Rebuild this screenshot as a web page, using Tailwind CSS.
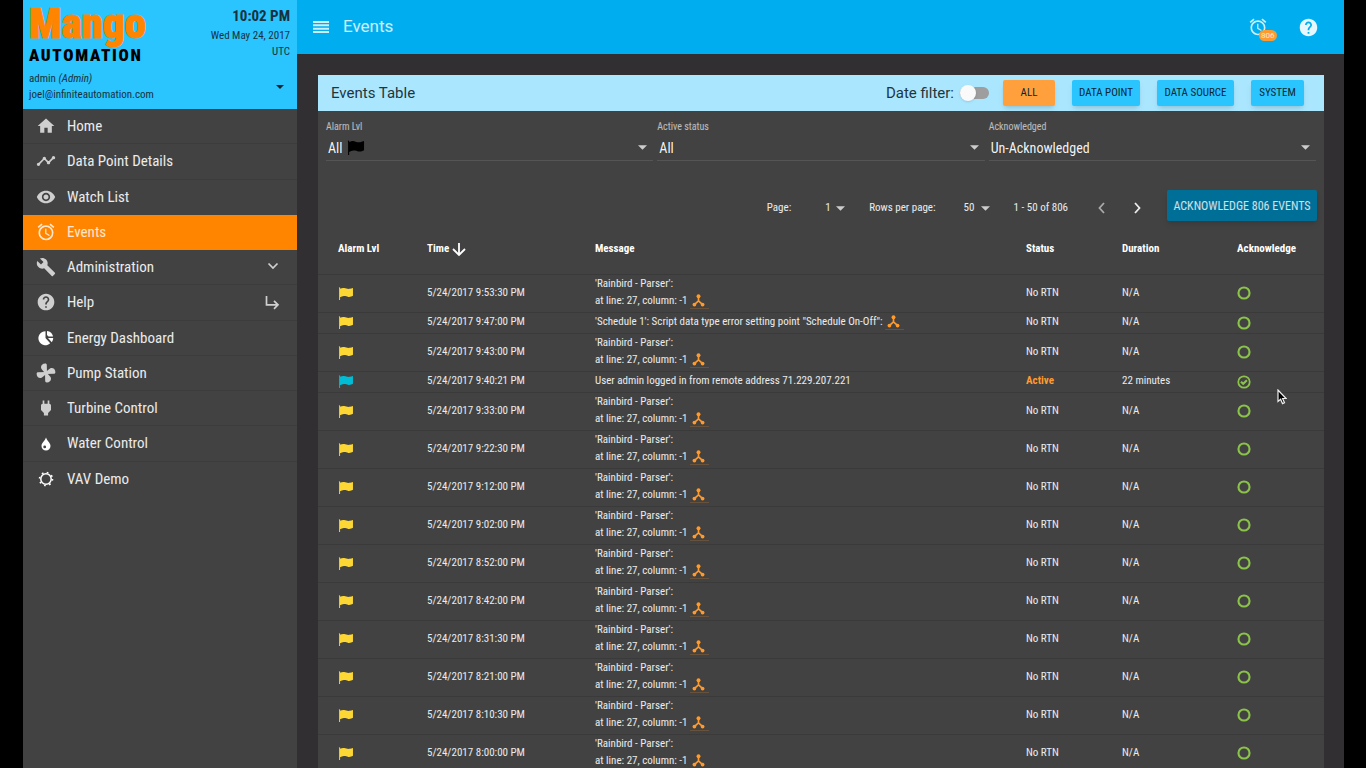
<!DOCTYPE html>
<html lang="en">
<head>
<meta charset="utf-8">
<meta name="viewport" content="width=device-width, initial-scale=1">
<title>Events - Mango Automation</title>
<script src="https://cdn.jsdelivr.net/npm/@tailwindcss/browser@4"></script>
</head>
<body class="h-screen overflow-hidden bg-black font-['Roboto_Condensed',Roboto,sans-serif] text-white/90">
<svg class="hidden" aria-hidden="true">
  <symbol id="flag" viewBox="0 0 16 14"><path fill="currentColor" d="M1 .4a.8.8 0 0 1 .6 1.3V2c1.600-.9 3-1.100 4.400-.9 2 .3 3.600 1.400 6 .9 1.300-.2 2.300-.8 3.500-1v8.500c-1.600.8-3.200 1.500-5 1.200-1.700-.3-3-1-4.800-.9-1.500.1-2.800.7-4.100 1.300V14H.6V1.700A.8.8 0 0 1 1 .4z"/></symbol>
  <symbol id="tree" viewBox="0 0 14 14"><path fill="none" stroke="currentColor" stroke-width="1.800" d="M7 2.500v5L2.500 11.500M7 7.500l4.500 4"/><circle cx="7" cy="2.500" r="2.100" fill="currentColor"/><circle cx="2.600" cy="11.400" r="2" fill="currentColor"/><circle cx="11.400" cy="11.400" r="2" fill="currentColor"/></symbol>
  <symbol id="ring" viewBox="0 0 24 24"><circle cx="12" cy="12" r="9.500" fill="none" stroke="currentColor" stroke-width="3.600"/></symbol>
  <symbol id="ringcheck" viewBox="0 0 24 24"><g fill="none" stroke="currentColor"><circle cx="12" cy="12" r="9.800" stroke-width="3"/><path stroke-width="3.600" d="M6.800 11.500l3.800 3.600 6.400-6.300"/></g></symbol>
  <symbol id="alarm" viewBox="0 0 24 24"><path fill="currentColor" d="M22 5.720l-4.600-3.860-1.290 1.530 4.600 3.860L22 5.720zM7.880 3.390L6.600 1.860 2 5.710l1.290 1.530 4.590-3.850zM12.500 8H11v6l4.750 2.850.75-1.230-4-2.370V8zM12 4c-4.970 0-9 4.030-9 9s4.020 9 9 9a9 9 0 0 0 0-18zm0 16c-3.870 0-7-3.130-7-7s3.130-7 7-7 7 3.130 7 7-3.130 7-7 7z"/></symbol>
  <symbol id="help" viewBox="0 0 24 24"><path fill="currentColor" d="M12 2C6.480 2 2 6.480 2 12s4.480 10 10 10 10-4.480 10-10S17.520 2 12 2zm1 17h-2v-2h2v2zm2.070-7.750l-.9.920C13.450 12.900 13 13.500 13 15h-2v-.5c0-1.100.450-2.100 1.170-2.830l1.240-1.260c.370-.360.590-.860.590-1.410 0-1.100-.9-2-2-2s-2 .9-2 2H8c0-2.210 1.790-4 4-4s4 1.790 4 4c0 .880-.360 1.680-.930 2.250z"/></symbol>
  <symbol id="caret" viewBox="0 0 10 5"><path fill="currentColor" d="M0 0h10L5 5z"/></symbol>
</svg>

<div class="mr-[22px] ml-[23px] flex h-full bg-[#322f32]">
  <aside class="flex w-[274px] shrink-0 flex-col bg-[#424242]">
    <header class="flex h-[109px] flex-col justify-between bg-[#2ac4ff] pr-[7px] pb-[6px] pl-[6px] text-[#17323d]">
      <div class="flex justify-between">
        <div class="font-black">
          <div class="h-[43px] text-[43px] leading-[46px] text-[#ff8500] [-webkit-text-stroke:1px_#ff8500]">Mango</div>
          <div class="text-[17px] leading-6 tracking-widest text-black">AUTOMATION</div>
        </div>
        <div class="pt-1 text-right text-[11px] leading-4">
          <div class="text-[15px] leading-6 font-bold">10:02 PM</div>
          <div>Wed May 24, 2017</div>
          <div>UTC</div>
        </div>
      </div>
      <div class="flex items-center justify-between text-[11px] leading-4">
        <div>
          <div>admin <i>(Admin)</i></div>
          <div>joel@infiniteautomation.com</div>
        </div>
        <button aria-label="User menu" class="mr-[6px] text-[#12272f]"><svg class="h-[4px] w-2"><use href="#caret"/></svg></button>
      </div>
    </header>
    <nav class="grid min-h-[388px] auto-rows-fr text-[15px]">
      <a href="#" class="flex items-center border-b border-[#3c3c3c] pr-4 pl-[13px]"><svg class="mr-[11px] size-5 text-[#cfcfcf]" viewBox="0 0 24 24" fill="currentColor"><path d="M10 20v-6h4v6h5v-8h3L12 3 2 12h3v8z"/></svg>Home</a>
      <a href="#" class="flex items-center border-b border-[#3c3c3c] pr-4 pl-[13px]"><svg class="mr-[11px] size-5 text-[#cfcfcf]" viewBox="0 0 24 24" fill="currentColor"><path d="M23 8c0 1.100-.9 2-2 2-.180 0-.350-.020-.510-.070l-3.560 3.550c.050.160.070.340.070.520 0 1.100-.9 2-2 2s-2-.9-2-2c0-.180.020-.360.070-.520l-2.550-2.550c-.160.050-.340.070-.520.070s-.360-.020-.520-.070l-4.550 4.560c.050.160.070.330.070.510 0 1.100-.9 2-2 2s-2-.9-2-2 .9-2 2-2c.180 0 .350.020.510.070l4.560-4.550C8.020 9.360 8 9.180 8 9c0-1.100.9-2 2-2s2 .9 2 2c0 .180-.020.360-.070.520l2.550 2.550c.160-.050.340-.070.520-.070s.360.020.520.070l3.550-3.560C19.020 8.350 19 8.180 19 8c0-1.100.9-2 2-2s2 .9 2 2z"/></svg>Data Point Details</a>
      <a href="#" class="flex items-center pr-4 pl-[13px]"><svg class="mr-[11px] size-5 text-[#cfcfcf]" viewBox="0 0 24 24" fill="currentColor"><path d="M12 4.500C7 4.500 2.730 7.610 1 12c1.730 4.390 6 7.500 11 7.500s9.270-3.110 11-7.500c-1.730-4.390-6-7.500-11-7.500zM12 17c-2.760 0-5-2.240-5-5s2.240-5 5-5 5 2.240 5 5-2.240 5-5 5zm0-8c-1.660 0-3 1.340-3 3s1.340 3 3 3 3-1.340 3-3-1.340-3-3-3z"/></svg>Watch List</a>
      <a href="#" aria-current="page" class="flex items-center bg-[#ff8500] pr-4 pl-[13px] text-white/80"><svg class="mr-[11px] size-5"><use href="#alarm"/></svg>Events</a>
      <a href="#" class="flex items-center border-b border-[#3c3c3c] pr-4 pl-[13px]"><svg class="mr-[11px] size-5 text-[#cfcfcf]" viewBox="0 0 24 24" fill="currentColor"><path d="M22.700 19l-9.100-9.100c.9-2.300.4-5-1.500-6.900-2-2-5-2.400-7.400-1.300L9 6 6 9 1.600 4.700C.4 7.100.9 10.100 2.900 12.100c1.900 1.900 4.600 2.400 6.900 1.500l9.100 9.100c.4.4 1 .4 1.400 0l2.300-2.300c.5-.4.5-1.100.1-1.400z"/></svg>Administration<svg class="ml-auto h-4 w-4 text-[#cfcfcf]" viewBox="0 0 16 16" fill="none" stroke="currentColor" stroke-width="1.700"><path d="M3.500 4.500L8 9l4.500-4.500"/></svg></a>
      <a href="#" class="flex items-center border-b border-[#3c3c3c] pr-4 pl-[13px]"><svg class="mr-[11px] size-5 text-[#cfcfcf]"><use href="#help"/></svg>Help<svg class="ml-auto size-[18px] text-[#cfcfcf]" viewBox="0 0 18 18" fill="none" stroke="currentColor" stroke-width="1.700"><path d="M3.500 3v8.800h11.500M11 7.800l4 4-4 4"/></svg></a>
      <a href="#" class="flex items-center border-b border-[#3c3c3c] pr-4 pl-[13px]"><svg class="mr-[11px] size-5 text-white" viewBox="0 0 20 20" fill="currentColor"><path d="M9.500 3.200V10l4.700 5.300A7 7 0 1 1 9.500 3.200z"/><path d="M11 2.900c3 .2 5.600 2.500 6 5.500h-4.500L11 7z"/><path d="M12 10h5.200c0 1.700-.6 3-1.500 4.200z"/></svg>Energy Dashboard</a>
      <a href="#" class="flex items-center border-b border-[#3c3c3c] pr-4 pl-[13px]"><svg class="mr-[11px] size-5 text-[#cfcfcf]" viewBox="0 0 20 20" fill="currentColor"><path d="M11 10L10.800 2C10.800 1.200 10.200.6 9.300.6 6.500.6 5 2.400 5 4.300 5 6.800 7.800 7.600 9 11z"/><path d="M11 10L10.800 2C10.800 1.200 10.200.6 9.300.6 6.500.6 5 2.400 5 4.300 5 6.800 7.800 7.600 9 11z" transform="rotate(90 10 10)"/><path d="M11 10L10.800 2C10.800 1.200 10.200.6 9.300.6 6.500.6 5 2.400 5 4.300 5 6.800 7.800 7.600 9 11z" transform="rotate(180 10 10)"/><path d="M11 10L10.800 2C10.800 1.200 10.200.6 9.300.6 6.500.6 5 2.400 5 4.300 5 6.800 7.800 7.600 9 11z" transform="rotate(270 10 10)"/></svg>Pump Station</a>
      <a href="#" class="flex items-center border-b border-[#3c3c3c] pr-4 pl-[13px]"><svg class="mr-[11px] size-5 text-[#cfcfcf]" viewBox="0 0 24 24" fill="currentColor"><path d="M16.010 7L16 3h-2v4h-4V3H8v4h-.010C7 6.990 6 7.990 6 8.990v5.490L9.500 18v3h5v-3l3.500-3.510v-5.500c0-1-1-2-1.990-1.990z"/></svg>Turbine Control</a>
      <a href="#" class="flex items-center border-b border-[#3c3c3c] pr-4 pl-[13px]"><svg class="mr-[11px] size-5 text-white" viewBox="0 0 20 20" fill="currentColor" fill-rule="evenodd"><path d="M10 3.500c.8 3 4.500 5.200 4.500 8.500a4.500 4.500 0 0 1-9 0C5.500 8.700 9.200 6.500 10 3.500zM8.700 11.500a1.400 1.400 0 1 0 0 2.800 1.400 1.400 0 0 0 0-2.800z"/></svg>Water Control</a>
      <a href="#" class="flex items-center pr-4 pl-[13px]"><svg class="mr-[11px] size-5" viewBox="0 0 20 20" fill="none" stroke="white"><circle cx="10" cy="10" r="5.200" stroke-width="1.500"/><circle cx="10" cy="10" r="6.500" stroke-width="1.600" stroke-dasharray="1.700 3.400"/></svg>VAV Demo</a>
    </nav>
  </aside>

  <div class="flex min-w-0 flex-1 flex-col">
    <header class="flex h-[54px] shrink-0 items-center bg-[#00aeef] pr-[25px] pl-4 font-['Roboto',sans-serif] text-white/80">
      <button aria-label="Toggle menu" class="mr-[14px]"><svg class="h-3 w-4" viewBox="0 0 16 12" stroke="currentColor" stroke-width="2"><path d="M0 1h16M0 4.300h16M0 7.700h16M0 11h16"/></svg></button>
      <h1 class="text-[17px]">Events</h1>
      <button aria-label="806 alarms" class="relative mr-[30px] ml-auto"><svg class="size-5"><use href="#alarm"/></svg><span class="absolute top-[13px] left-[11px] rounded-full bg-[#ff9a2e] px-[2px] text-[8px] leading-[11px] text-white/80">806</span></button>
      <button aria-label="Help" class="text-white/90"><svg class="size-[21px]"><use href="#help"/></svg></button>
    </header>

    <main class="mt-[21px] mr-5 ml-[21px] min-h-0 flex-1 overflow-hidden bg-[#424242]">
      <div class="flex h-9 items-center bg-[#aae7ff] pr-5 pl-[13px] font-['Roboto',sans-serif] text-[15px] text-[#22353d]">
        <h2>Events Table</h2>
        <label class="mr-[14px] ml-auto flex items-center gap-[6px]">Date filter:
          <input type="checkbox" class="relative h-3 w-[29px] appearance-none rounded-full bg-[#9e9e9e] before:absolute before:-top-[2px] before:left-0 before:size-4 before:rounded-full before:bg-[#fafafa] before:shadow before:content-['']">
        </label>
        <div class="flex gap-[17px] font-['Roboto_Condensed',Roboto,sans-serif] text-[11px] text-[#0c2631]">
          <button class="h-[26px] w-[52px] rounded-[2px] bg-[#ffa03c] shadow-md">ALL</button>
          <button class="h-[26px] w-[68px] rounded-[2px] bg-[#2ac4ff] shadow-md">DATA POINT</button>
          <button class="h-[26px] w-[77px] rounded-[2px] bg-[#2ac4ff] shadow-md">DATA SOURCE</button>
          <button class="h-[26px] w-[53px] rounded-[2px] bg-[#2ac4ff] shadow-md">SYSTEM</button>
        </div>
      </div>

      <div class="grid h-[63px] grid-cols-3 gap-1 px-2 pt-2">
        <label class="block text-[10px] leading-4 text-white/65">Alarm Lvl
          <span class="relative flex h-[26px] items-center border-b border-white/10 text-[14px] text-white/95"><select class="w-full appearance-none px-[2px] outline-none"><option>All</option></select><svg class="absolute left-[21px] h-[15px] w-[18px] text-black"><use href="#flag"/></svg><svg class="pointer-events-none absolute right-[6px] h-[5px] w-[9px] text-[#ccc]"><use href="#caret"/></svg></span>
        </label>
        <label class="block text-[10px] leading-4 text-white/65">Active status
          <span class="relative flex h-[26px] items-center border-b border-white/10 text-[14px] text-white/95"><select class="w-full appearance-none px-[2px] outline-none"><option>All</option></select><svg class="pointer-events-none absolute right-[6px] h-[5px] w-[9px] text-[#ccc]"><use href="#caret"/></svg></span>
        </label>
        <label class="block text-[10px] leading-4 text-white/65">Acknowledged
          <span class="relative flex h-[26px] items-center border-b border-white/10 text-[14px] text-white/95"><select class="w-full appearance-none px-[2px] outline-none"><option>Un-Acknowledged</option></select><svg class="pointer-events-none absolute right-[6px] h-[5px] w-[9px] text-[#ccc]"><use href="#caret"/></svg></span>
        </label>
      </div>

      <div class="flex h-[50px] items-end justify-end pr-[7px] pb-[3px] text-[11px]">
        <div class="flex h-[26px] items-center">
          <label class="mr-6 flex items-center gap-[26px]">Page:<span class="relative flex items-center"><select class="w-7 appearance-none pl-2 outline-none"><option>1</option></select><svg class="pointer-events-none absolute right-0 h-[5px] w-[9px] text-[#ccc]"><use href="#caret"/></svg></span></label>
          <label class="mr-6 flex items-center gap-[26px]">Rows per page:<span class="relative flex items-center"><select class="w-7 appearance-none pl-[2px] outline-none"><option>50</option></select><svg class="pointer-events-none absolute right-0 h-[5px] w-[9px] text-[#ccc]"><use href="#caret"/></svg></span></label>
          <span>1 - 50 of 806</span>
          <button aria-label="Previous page" class="ml-7"><svg class="h-3 w-3 text-[#aaa]" viewBox="0 0 12 12" fill="none" stroke="currentColor" stroke-width="1.800"><path d="M8 1L3.500 6 8 11"/></svg></button>
          <button aria-label="Next page" class="mr-6 ml-[23px]"><svg class="h-3 w-3" viewBox="0 0 12 12" fill="none" stroke="currentColor" stroke-width="1.800"><path d="M4 1l4.500 5L4 11"/></svg></button>
        </div>
        <button class="h-[31px] w-[150px] rounded-[2px] bg-[#006f98] text-[12px] whitespace-nowrap text-white/80 shadow-md">ACKNOWLEDGE 806 EVENTS</button>
      </div>

      <table class="w-full table-fixed border-collapse text-left text-[11px]">
        <colgroup><col class="w-[109px]"><col class="w-[168px]"><col><col class="w-24"><col class="w-[115px]"><col class="w-[87px]"></colgroup>
        <thead>
          <tr class="h-[50px] border-b border-[#3a3a3a] text-white">
            <th class="pl-5">Alarm Lvl</th>
            <th><span class="flex items-center gap-[2px]">Time<svg class="size-4" viewBox="0 0 16 16" fill="none" stroke="currentColor" stroke-width="1.800"><path d="M8 2v12M2 8l6 6 6-6"/></svg></span></th>
            <th>Message</th><th>Status</th><th>Duration</th><th>Acknowledge</th>
          </tr>
        </thead>
        <tbody id="rows"></tbody>
      </table>
    </main>
  </div>
</div>

<svg class="absolute top-[389px] left-[1277px] h-4 w-[10px]" viewBox="0 0 10 16"><path fill="#000" stroke="#eee" stroke-width="1.200" d="M1 1v11.500l2.600-2.300 1.900 4.400 2-.9-1.900-4.200h3.500z"/></svg>

<script>
const parser = `'Rainbird - Parser':<br>at line: 27, column: -1 `;
const link = `<a href="#" aria-label="Open data point" class="inline-block h-[15px] border-b border-[#ff9a2e]/20 pr-1 align-bottom text-[#ff9a2e]"><svg class="ml-[2px] size-[13px]"><use href="#tree"/></svg></a>`;
const events = [
  ['9:53:30', parser + link],
  ['9:47:00', `'Schedule 1': Script data type error setting point "Schedule On-Off": ` + link, 'short'],
  ['9:43:00', parser + link],
  ['9:40:21', 'User admin logged in from remote address 71.229.207.221', 'login'],
  ...['9:33:00', '9:22:30', '9:12:00', '9:02:00', '8:52:00', '8:42:00', '8:31:30', '8:21:00', '8:10:30', '8:00:00'].map(t => [t, parser + link])
];
document.getElementById('rows').innerHTML = events.map(([time, message, kind]) => {
  const login = kind === 'login';
  return `<tr class="border-b border-[#3a3a3a] ${kind ? 'h-[21px]' : 'h-[38px]'}">
    <td class="pl-5"><svg class="h-[13px] w-4 ${login ? 'text-[#00bcd4]' : 'text-[#fdd835]'}"><use href="#flag"/></svg></td>
    <td>5/24/2017 ${time} PM</td>
    <td class="pb-[2px] leading-[17px] whitespace-nowrap">${message}</td>
    <td>${login ? '<b class="text-[#ff9a2e]">Active</b>' : 'No RTN'}</td>
    <td>${login ? '22 minutes' : 'N/A'}</td>
    <td><button aria-label="Acknowledge" class="block text-[#8bc34a]"><svg class="size-[14px]"><use href="${login ? '#ringcheck' : '#ring'}"/></svg></button></td>
  </tr>`;
}).join('');
</script>
</body>
</html>
